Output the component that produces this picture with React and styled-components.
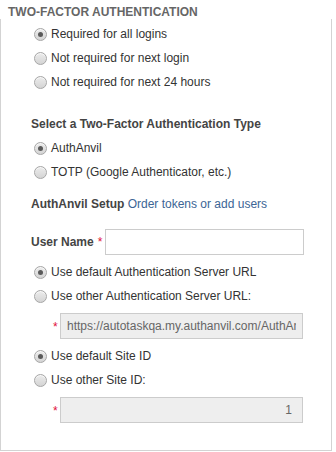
import React from "react";
import styled, { createGlobalStyle } from "styled-components";

const FONT = `"Liberation Sans", Arial, sans-serif`;

const Global = createGlobalStyle`
  html, body { margin: 0; padding: 0; background: #fff; }
  body { font-family: ${FONT}; font-size: 12px; color: #333; }
`;

const Page = styled.div`
  width: 336px;
  height: 452px;
  overflow: hidden;
`;

const Heading = styled.div`
  padding: 5px 0 0 8px;
  height: 14px;
  line-height: 14px;
  font-size: 12px;
  font-weight: bold;
  color: #666;
  text-transform: uppercase;
`;

const Box = styled.div`
  width: 330px;
  height: 428px;
  border: 1px solid #d3d3d3;
  border-top: none;
  padding-top: 3px;
  display: flex;
  flex-direction: column;
`;

const Row = styled.label`
  display: flex;
  align-items: center;
  height: 24px;
  padding-left: 33px;
  gap: 4px;
  color: #333;
  font-size: 12px;
  white-space: nowrap;
`;

const Radio = styled.span`
  position: relative;
  width: 11px;
  height: 11px;
  border-radius: 50%;
  border: 1px solid #a6a6a6;
  background: linear-gradient(#ececec, #d4d4d4);
  box-shadow: inset 0 1px 0 rgba(255, 255, 255, 0.7);
  flex: none;
  &::after {
    content: "";
    display: ${(p) => (p.$checked ? "block" : "none")};
    position: absolute;
    left: 3px;
    top: 3px;
    width: 5px;
    height: 5px;
    border-radius: 50%;
    background: #5a5a5a;
  }
`;

const SectionTitle = styled.div`
  padding-left: 30px;
  margin-top: ${(p) => p.$top || 0}px;
  margin-bottom: ${(p) => p.$bottom || 0}px;
  height: 16px;
  line-height: 16px;
  font-size: 12px;
  font-weight: bold;
  color: #444;
`;

const Link = styled.a`
  font-weight: normal;
  color: #3c6595;
  text-decoration: none;
`;

const FieldRow = styled.div`
  display: flex;
  align-items: center;
  padding-left: ${(p) => p.$indent}px;
  margin: ${(p) => p.$margin};
`;

const Label = styled.span`
  font-weight: bold;
  color: #444;
  font-size: 12px;
  margin-right: 4px;
`;

const Req = styled.span`
  color: #e0103a;
  font-weight: normal;
  font-size: 12px;
  width: ${(p) => (p.$w ? p.$w + "px" : "auto")};
  margin-right: ${(p) => p.$mr || 0}px;
  position: relative;
  top: ${(p) => p.$dy || 0}px;
`;

const TextInput = styled.input`
  box-sizing: border-box;
  width: ${(p) => p.$w}px;
  height: 26px;
  border: 1px solid #ccc;
  border-radius: 0;
  background: ${(p) => (p.disabled ? "#eeeeee" : "#fff")};
  color: #666;
  -webkit-text-fill-color: #666;
  opacity: 1;
  font-family: ${FONT};
  font-size: 12px;
  padding: 0 ${(p) => (p.$right ? 10 : 6)}px 0 6px;
  text-align: ${(p) => (p.$right ? "right" : "left")};
  outline: none;
  margin: 0;
`;

const Opt = ({ checked, children }) => (
  <Row>
    <Radio $checked={checked} />
    <span>{children}</span>
  </Row>
);

export default function App() {
  return (
    <Page>
      <Global />
      <Heading>Two-Factor Authentication</Heading>
      <Box>
        <Opt checked>Required for all logins</Opt>
        <Opt>Not required for next login</Opt>
        <Opt>Not required for next 24 hours</Opt>

        <SectionTitle $top={22} $bottom={4}>
          Select a Two-Factor Authentication Type
        </SectionTitle>
        <Opt checked>AuthAnvil</Opt>
        <Opt>TOTP (Google Authenticator, etc.)</Opt>

        <SectionTitle $top={12}>
          AuthAnvil Setup <Link href="#">Order tokens or add users</Link>
        </SectionTitle>

        <FieldRow $indent={30} $margin="17px 0 5px 0">
          <Label>User Name</Label>
          <Req $mr={3}>*</Req>
          <TextInput $w={199} defaultValue="" />
        </FieldRow>

        <Opt checked>Use default Authentication Server URL</Opt>
        <Opt>Use other Authentication Server URL:</Opt>
        <FieldRow $indent={52} $margin="5px 0">
          <Req $w={7} $dy={1}>*</Req>
          <TextInput
            $w={243}
            disabled
            defaultValue="https://autotaskqa.my.authanvil.com/AuthAnvil/SAS.asmx"
          />
        </FieldRow>

        <Opt checked>Use default Site ID</Opt>
        <Opt>Use other Site ID:</Opt>
        <FieldRow $indent={52} $margin="5px 0">
          <Req $w={7} $dy={1}>*</Req>
          <TextInput $w={243} $right disabled defaultValue="1" />
        </FieldRow>
      </Box>
    </Page>
  );
}
